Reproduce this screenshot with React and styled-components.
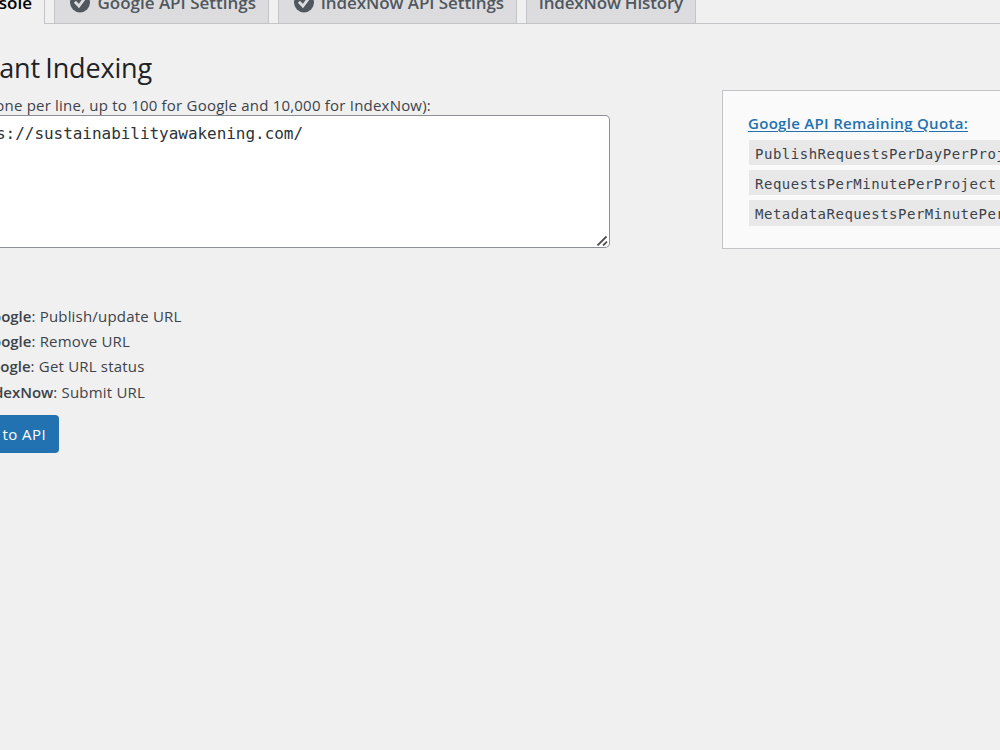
import React from 'react';
import styled, { createGlobalStyle } from 'styled-components';

const Global = createGlobalStyle`
  * { box-sizing: border-box; }
  body { margin: 0; background: #f0f0f0; color: #3c434a; font: 15px/25px "Open Sans", "Noto Sans", sans-serif; letter-spacing: 0.19px; }
`;
const Page = styled.div`height: 750px; overflow: hidden;`;
const Tabs = styled.nav`
  display: flex; align-items: flex-end; gap: 9px; height: 24px;
  border-bottom: 1px solid #c3c4c7;
`;
const Tab = styled.a`
  display: flex; flex: none; justify-content: flex-end; gap: ${p => p.$gap || 0}px;
  width: ${p => p.$width}px; height: ${p => (p.$active ? 44 : 43)}px; padding: 8px 12px 0;
  margin-bottom: ${p => (p.$active ? -1 : 0)}px;
  border: 1px solid #c3c4c7; border-bottom: 0; border-left-width: ${p => (p.$active ? 0 : 1)}px;
  background: ${p => (p.$active ? '#f0f0f0' : '#dcdcde')};
  color: ${p => (p.$active ? '#000' : '#50575e')};
  font-size: 17px; line-height: 28px; font-weight: 600; letter-spacing: ${p => p.$track || 0}px; white-space: nowrap;
`;
const Badge = styled.svg`width: 21px; height: 21px; margin-top: 3px; flex: none;`;
const Content = styled.main`display: flex; justify-content: space-between; align-items: flex-start;`;
const Form = styled.section`width: 610px; padding-top: 25px;`;
const Clip = styled.div`
  display: flex; justify-content: flex-end; width: ${p => p.$width}px; overflow: hidden; white-space: pre;
`;
const Heading = styled.h2`
  margin: 0; color: #1d2327; font-size: 27px; line-height: 38px; font-weight: 400; letter-spacing: -0.15px; word-spacing: -1.5px;
`;
const Label = styled.label`line-height: 24px; padding-top: 6px; margin-bottom: -1px; letter-spacing: 0.21px;`;
const UrlBox = styled.div`
  display: flex; flex-direction: column; justify-content: space-between; height: 133px; margin-top: -1px;
  background: #fff; border: 1px solid #8c8f94; border-left: 0; border-radius: 0 5px 5px 0;
`;
const UrlText = styled.div`
  color: #2c3338; font: 16px/30px "DejaVu Sans Mono", "Liberation Mono", monospace; letter-spacing: -0.04px; padding-top: 3px;
`;
const Grip = styled.svg`width: 12px; height: 12px; align-self: flex-end; margin: 0 1px 1px 0;`;
const Options = styled.div`display: flex; flex-direction: column; margin-top: 56px; line-height: 25.2px;`;
const Strong = styled.b`font-weight: 600; letter-spacing: 0;`;
const Submit = styled.button`
  display: flex; justify-content: flex-end; align-items: center; width: 59px; height: 38px; margin-top: 10px; padding: 1px 13px 0 0;
  border: 0; border-radius: 0 4px 4px 0; background: #2271b1; color: #fff; font: inherit; letter-spacing: 0.4px; white-space: nowrap; overflow: hidden;
`;
const Quota = styled.aside`
  width: 278px; height: 159px; margin-top: 66px; padding: 20px 0 0 25px; overflow: hidden;
  border: 1px solid #c3c4c7; border-right: 0; background: #fafafa;
`;
const QuotaLink = styled.a`
  display: block; color: #2271b1; font-weight: 600; line-height: 25px; letter-spacing: 0.3px;
  text-decoration: underline; text-decoration-thickness: 1px; text-underline-offset: 2px;
`;
const Codes = styled.div`display: flex; flex-direction: column; gap: 5px; margin: 4px 0 0 1px;`;
const Code = styled.code`
  display: block; height: 25px; padding-left: 6px; background: #e8e8e8; white-space: nowrap;
  font: 14px/29px "DejaVu Sans Mono", "Liberation Mono", monospace; letter-spacing: 0.51px;
  &:last-child { height: 26px; }
`;

const Check = () => (
  <Badge viewBox="0 0 21 21">
    <circle cx="10" cy="10.5" r="10" fill="#50575e" />
    <path d="M4.9 9.7 L8.9 14 L15.3 5.5" fill="none" stroke="#dcdcde" strokeWidth="2.8" />
  </Badge>
);
const Option = ({ name, width, children }) => (
  <Clip $width={width}><Strong>{name}</Strong>{': ' + children}</Clip>
);

export default function App() {
  return (
    <Page>
      <Global />
      <Tabs>
        <Tab $width={45} $active>Console</Tab>
        <Tab $width={215} $gap={6}><Check /><span>Google API Settings</span></Tab>
        <Tab $width={239} $gap={6} $track={-0.07}><Check /><span>IndexNow API Settings</span></Tab>
        <Tab $width={170} $track={-0.17}>IndexNow History</Tab>
      </Tabs>
      <Content>
        <Form>
          <Clip $width={152}><Heading>Instant Indexing</Heading></Clip>
          <Clip $width={431}><Label>URLs (one per line, up to 100 for Google and 10,000 for IndexNow):</Label></Clip>
          <UrlBox>
            <Clip $width={303}><UrlText>https://sustainabilityawakening.com/</UrlText></Clip>
            <Grip viewBox="0 0 12 12"><path d="M1.5 11.5 L10.5 2.5 M7 11.5 L11 7.7" fill="none" stroke="#505050" strokeWidth="1.8" /></Grip>
          </UrlBox>
          <Options>
            <Option name="Google" width={181.5}>Publish/update URL</Option>
            <Option name="Google" width={130}>Remove URL</Option>
            <Option name="Google" width={144.5}>Get URL status</Option>
            <Option name="IndexNow" width={145}>Submit URL</Option>
          </Options>
          <Submit>Send to API</Submit>
        </Form>
        <Quota>
          <QuotaLink>Google API Remaining Quota:</QuotaLink>
          <Codes>
            <Code>PublishRequestsPerDayPerProject</Code>
            <Code>RequestsPerMinutePerProject</Code>
            <Code>MetadataRequestsPerMinutePerProject</Code>
          </Codes>
        </Quota>
      </Content>
    </Page>
  );
}
